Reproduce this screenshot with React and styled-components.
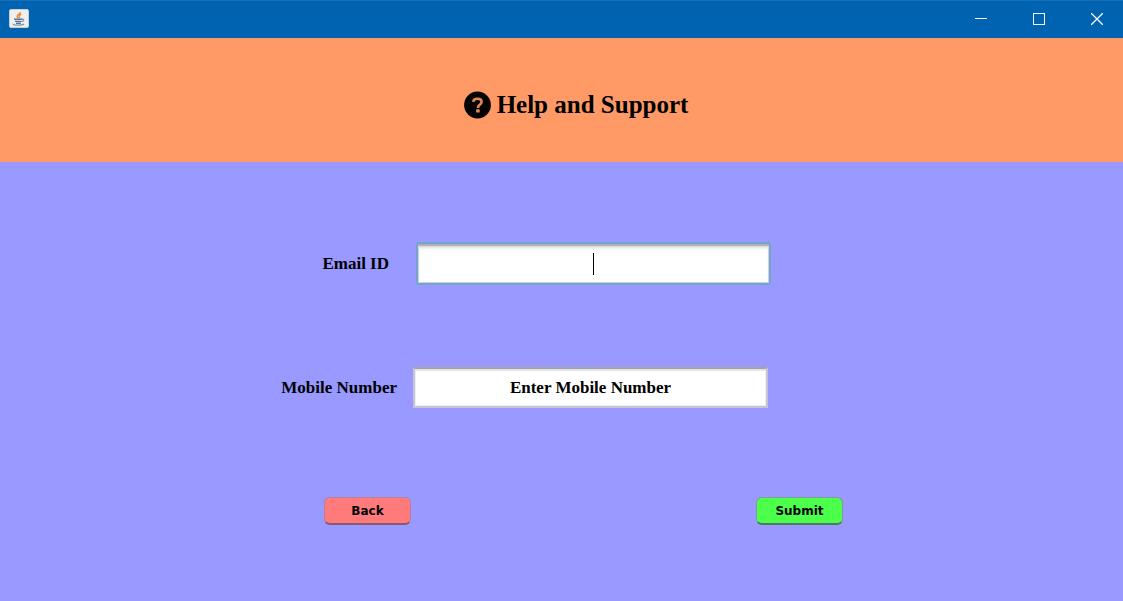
import React from "react";
import styled, { createGlobalStyle } from "styled-components";

const GlobalStyle = createGlobalStyle`
  *, *::before, *::after { box-sizing: border-box; }
  body { margin: 0; background: #9999ff; }
`;

const serif = `"Liberation Serif", "Times New Roman", serif`;

const Window = styled.div`
  min-height: 100vh;
  background: #9999ff;
  color: #000;
  font-family: ${serif};
`;

const TitleBar = styled.div`
  display: flex;
  align-items: center;
  justify-content: space-between;
  height: 38px;
  padding-left: 9px;
  background: #0063b1;
  box-shadow: inset 0 1px #176fb6;
`;

const WindowControls = styled.div`
  display: flex;
  align-self: stretch;
  margin-right: -3px;
  overflow: hidden;
`;

const WindowButton = styled.button`
  display: flex;
  align-items: center;
  justify-content: center;
  width: 58px;
  padding: 0;
  border: 0;
  background: transparent;
  color: #fff;
`;

const Banner = styled.header`
  display: flex;
  align-items: center;
  justify-content: center;
  gap: 6px;
  height: 124px;
  padding: 10px 0 0 29px;
  background: #ff9966;
`;

const Title = styled.h1`
  margin: 0;
  font-size: 25px;
  line-height: 30px;
  font-weight: 700;
`;

const Form = styled.form`
  display: flex;
  flex-direction: column;
  padding: 80px 0 72px;
`;

const FieldRow = styled.div`
  display: grid;
  grid-template-columns: ${(p) => p.$before}fr 355px ${(p) => p.$after}fr;
  column-gap: ${(p) => p.$gap}px;
  align-items: center;
  margin-bottom: 82px;
`;

const Label = styled.label`
  text-align: right;
  font-size: 17px;
  line-height: 20px;
  font-weight: 700;
`;

const TextInput = styled.input`
  width: 100%;
  height: ${(p) => (p.$active ? 43 : 41)}px;
  padding: 0 6px;
  border: 2px solid;
  border-color: ${(p) => (p.$active ? "#73a4d1" : "#a3a3ad #c4c4d4 #c4c4d4")};
  border-radius: ${(p) => (p.$active ? 2 : 0)}px;
  outline: none;
  background: #fff;
  box-shadow: ${(p) =>
    p.$active
      ? "inset 0 2px 1px #b0b0b0, inset 0 4px 3px #dedede, inset 0 0 0 1px #cdd2d4"
      : "inset 0 2px 1px #e4e4e4, inset 0 0 0 1px #f0f0f0"};
  color: #000;
  font: 700 17px/20px ${serif};
  text-align: center;

  &:placeholder-shown:not(:focus) {
    background: linear-gradient(#000, #000) center / 1px 22px no-repeat #fff;
  }
`;

const Actions = styled.div`
  display: grid;
  grid-template-columns: 324fr 87px 345fr 87px 280fr;
  padding-top: 7px;
`;

const ActionButton = styled.button`
  grid-column: ${(p) => p.$column};
  height: 28px;
  padding: 0;
  border: 1px solid;
  border-color: ${(p) => p.$edge};
  border-bottom: 2px solid ${(p) => p.$shade};
  border-radius: 6px;
  background: ${(p) => p.$fill};
  color: #000;
  font: 700 12px/16px "DejaVu Sans", Verdana, sans-serif;
`;

function JavaIcon() {
  return (
    <svg width="20" height="20" viewBox="0 0 20 20" fill="none" aria-hidden="true">
      <rect x="0.5" y="0.5" width="19" height="18" rx="1.5" fill="#efefed" stroke="#c9d0d5" />
      <path d="M11.2 3C12 5 6.2 6.2 8.9 9M12.2 5.2C8.6 6.6 11.6 7.2 9.8 9.4" stroke="#ee8b45" strokeWidth="1.6" />
      <path d="M5 10.3h8.4M6 12.4h6.4M7 14.2h4.8" stroke="#54799d" strokeWidth="1.4" />
      <path d="M13 10.2c2.4-.6 2.3 1.9-.4 2.4M4 14.8c-.8 1.7 9 2 11 .2" stroke="#7895b0" strokeWidth="1.2" />
    </svg>
  );
}

function HelpIcon() {
  return (
    <svg width="27" height="28" viewBox="0 0 27 28" aria-hidden="true">
      <circle cx="13.5" cy="14" r="13.4" fill="#050300" />
      <path d="M9.2 10.8c.2-2.3 1.8-3.1 4.3-3.1 2.7 0 4.1 1.1 4.1 3 0 3-3.6 2.8-3.6 6.2" fill="none" stroke="#df8757" strokeWidth="2.6" />
      <rect x="12.1" y="18.2" width="3.6" height="3.4" rx="0.6" fill="#df8757" />
    </svg>
  );
}

export default function App() {
  return (
    <Window>
      <GlobalStyle />
      <TitleBar>
        <JavaIcon />
        <WindowControls>
          <WindowButton type="button" aria-label="Minimize">
            <svg width="12" height="12"><path d="M0 5.5h12" stroke="currentColor" /></svg>
          </WindowButton>
          <WindowButton type="button" aria-label="Maximize">
            <svg width="12" height="12"><rect x="0.5" y="0.5" width="11" height="11" fill="none" stroke="currentColor" /></svg>
          </WindowButton>
          <WindowButton type="button" aria-label="Close">
            <svg width="12" height="12"><path d="M0 0l12 12M12 0L0 12" stroke="currentColor" strokeWidth="1.3" /></svg>
          </WindowButton>
        </WindowControls>
      </TitleBar>
      <Banner>
        <HelpIcon />
        <Title>Help and Support</Title>
      </Banner>
      <Form onSubmit={(event) => event.preventDefault()}>
        <FieldRow $before={389} $after={325} $gap={27}>
          <Label htmlFor="email">Email ID</Label>
          <TextInput id="email" type="text" placeholder=" " $active />
        </FieldRow>
        <FieldRow $before={397} $after={339} $gap={16}>
          <Label htmlFor="mobile">Mobile Number</Label>
          <TextInput id="mobile" type="text" defaultValue="Enter Mobile Number" />
        </FieldRow>
        <Actions>
          <ActionButton type="button" $column={2} $fill="#ff7b7b" $edge="#b58098" $shade="#885a70">Back</ActionButton>
          <ActionButton type="submit" $column={4} $fill="#4bff4b" $edge="#7b9e9b" $shade="#4a7a60">Submit</ActionButton>
        </Actions>
      </Form>
    </Window>
  );
}
